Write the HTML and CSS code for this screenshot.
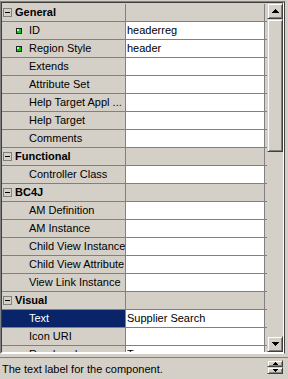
FILE: index.html
```html
<!DOCTYPE html>
<html>
<head>
<meta charset="utf-8">
<link rel="stylesheet" href="styles.css">
</head>
<body>
<div class="pane">
  <div class="pane-inner">
    <div class="grid">
      <div class="row group"><div class="label"><svg class="box" width="9" height="9" viewBox="0 0 9 9"><rect x="0.5" y="0.5" width="8" height="8" fill="none" stroke="#808080"/><rect x="2" y="4" width="5" height="1" fill="#000"/></svg>General</div><div class="value"></div></div>
      <div class="row"><div class="label"><svg class="bullet" width="6" height="6" viewBox="0 0 6 6"><rect width="6" height="6" fill="#202020"/><rect x="1" y="1" width="4" height="4" fill="#00d000"/><rect x="1" y="1" width="2" height="2" fill="#b8ffb8"/></svg>ID</div><div class="value">headerreg</div></div>
      <div class="row"><div class="label"><svg class="bullet" width="6" height="6" viewBox="0 0 6 6"><rect width="6" height="6" fill="#202020"/><rect x="1" y="1" width="4" height="4" fill="#00d000"/><rect x="1" y="1" width="2" height="2" fill="#b8ffb8"/></svg>Region Style</div><div class="value">header</div></div>
      <div class="row"><div class="label">Extends</div><div class="value"></div></div>
      <div class="row"><div class="label">Attribute Set</div><div class="value"></div></div>
      <div class="row"><div class="label">Help Target Appl ...</div><div class="value"></div></div>
      <div class="row"><div class="label">Help Target</div><div class="value"></div></div>
      <div class="row"><div class="label">Comments</div><div class="value"></div></div>
      <div class="row group"><div class="label"><svg class="box" width="9" height="9" viewBox="0 0 9 9"><rect x="0.5" y="0.5" width="8" height="8" fill="none" stroke="#808080"/><rect x="2" y="4" width="5" height="1" fill="#000"/></svg>Functional</div><div class="value"></div></div>
      <div class="row"><div class="label">Controller Class</div><div class="value"></div></div>
      <div class="row group"><div class="label"><svg class="box" width="9" height="9" viewBox="0 0 9 9"><rect x="0.5" y="0.5" width="8" height="8" fill="none" stroke="#808080"/><rect x="2" y="4" width="5" height="1" fill="#000"/></svg>BC4J</div><div class="value"></div></div>
      <div class="row"><div class="label">AM Definition</div><div class="value"></div></div>
      <div class="row"><div class="label">AM Instance</div><div class="value"></div></div>
      <div class="row"><div class="label">Child View Instance</div><div class="value"></div></div>
      <div class="row"><div class="label">Child View Attribute</div><div class="value"></div></div>
      <div class="row"><div class="label">View Link Instance</div><div class="value"></div></div>
      <div class="row group"><div class="label"><svg class="box" width="9" height="9" viewBox="0 0 9 9"><rect x="0.5" y="0.5" width="8" height="8" fill="none" stroke="#808080"/><rect x="2" y="4" width="5" height="1" fill="#000"/></svg>Visual</div><div class="value"></div></div>
      <div class="row selected"><div class="label">Text</div><div class="value">Supplier Search</div></div>
      <div class="row"><div class="label">Icon URI</div><div class="value"></div></div>
      <div class="row"><div class="label">Rendered</div><div class="value">True</div></div>
    </div>
    <div class="vscroll">
      <div class="sbtn"><svg width="7" height="4" viewBox="0 0 7 4"><path d="M3 0h1v1h1v1h1v1h1v1H0V3h1V2h1V1h1z" fill="#000"/></svg></div>
      <div class="thumb"></div>
      <div class="track"></div>
      <div class="sbtn"><svg width="7" height="4" viewBox="0 0 7 4"><path d="M0 0h7v1H6v1H5v1H4v1H3V3H2V2H1V1H0z" fill="#000"/></svg></div>
    </div>
  </div>
</div>
<div class="status">
  <div class="status-text">The text label for the component.</div>
  <div class="spin">
    <div class="spin-btn"><svg width="5" height="3" viewBox="0 0 5 3"><path d="M2 0h1v1h1v1h1v1H0V2h1V1h1z" fill="#000"/></svg></div>
    <div class="spin-btn"><svg width="5" height="3" viewBox="0 0 5 3"><path d="M0 0h5v1H4v1H3v1H2V2H1V1H0z" fill="#000"/></svg></div>
  </div>
</div>
</body>
</html>
```

FILE: styles.css
```css
html, body {
  margin: 0;
  padding: 0;
}
body {
  width: 288px;
  height: 379px;
  overflow: hidden;
  background: #d4d0c8;
  font-family: "Liberation Sans", Arial, sans-serif;
  font-size: 11px;
  color: #000;
}
.pane {
  margin-top: 1px;
  width: 285px;
  height: 353px;
  box-sizing: border-box;
  border-top: 1px solid #808080;
  border-left: 1px solid #808080;
  border-right: 1px solid #404040;
  border-bottom: 1px solid #ffffff;
}
.pane-inner {
  height: 100%;
  box-sizing: border-box;
  border-top: 1px solid #404040;
  border-left: 1px solid #404040;
  border-right: 1px solid #ffffff;
  border-bottom: 1px solid #ffffff;
  display: flex;
}
.grid {
  width: 265px;
  height: 349px;
  overflow: hidden;
  padding-top: 1px;
  box-sizing: border-box;
}
.row {
  display: grid;
  grid-template-columns: 124px 139px;
  height: 18px;
  box-sizing: border-box;
  border-bottom: 1px solid #808080;
  line-height: 17px;
  white-space: nowrap;
}
.label {
  border-right: 1px solid #808080;
  padding-left: 27px;
  position: relative;
  overflow: hidden;
}
.value {
  background: #fff;
  border-right: 1px solid #808080;
  padding-left: 1px;
  overflow: hidden;
}
.group .label {
  padding-left: 1px;
  font-weight: bold;
  display: flex;
  align-items: center;
}
.group .value {
  background: #d4d0c8;
}
.box {
  display: block;
  margin-right: 3px;
  flex: none;
}
.bullet {
  position: absolute;
  left: 14px;
  top: 6px;
}
.selected .label {
  background: #0a246a;
  color: #fff;
}
.vscroll {
  width: 16px;
  display: flex;
  flex-direction: column;
}
.sbtn, .thumb, .spin-btn {
  box-sizing: border-box;
  border: 1px solid;
  border-color: #d4d0c8 #404040 #404040 #d4d0c8;
  box-shadow: inset 1px 1px #ffffff, inset -1px -1px #808080;
  background: #d4d0c8;
}
.sbtn {
  height: 16px;
  display: flex;
  align-items: center;
  justify-content: center;
}
.thumb {
  height: 133px;
}
.track {
  flex: 1;
  background: #d4d0c8;
}
.status {
  margin-top: 3px;
  height: 22px;
  box-sizing: border-box;
  border-top: 1px solid #808080;
  display: flex;
}
.status-text {
  flex: 1;
  padding: 4px 0 0 2px;
  line-height: 14px;
}
.spin {
  width: 16px;
  margin: 2px 5px 0 0;
  display: flex;
  flex-direction: column;
}
.spin-btn {
  height: 7px;
  display: flex;
  align-items: center;
  justify-content: center;
}
```
